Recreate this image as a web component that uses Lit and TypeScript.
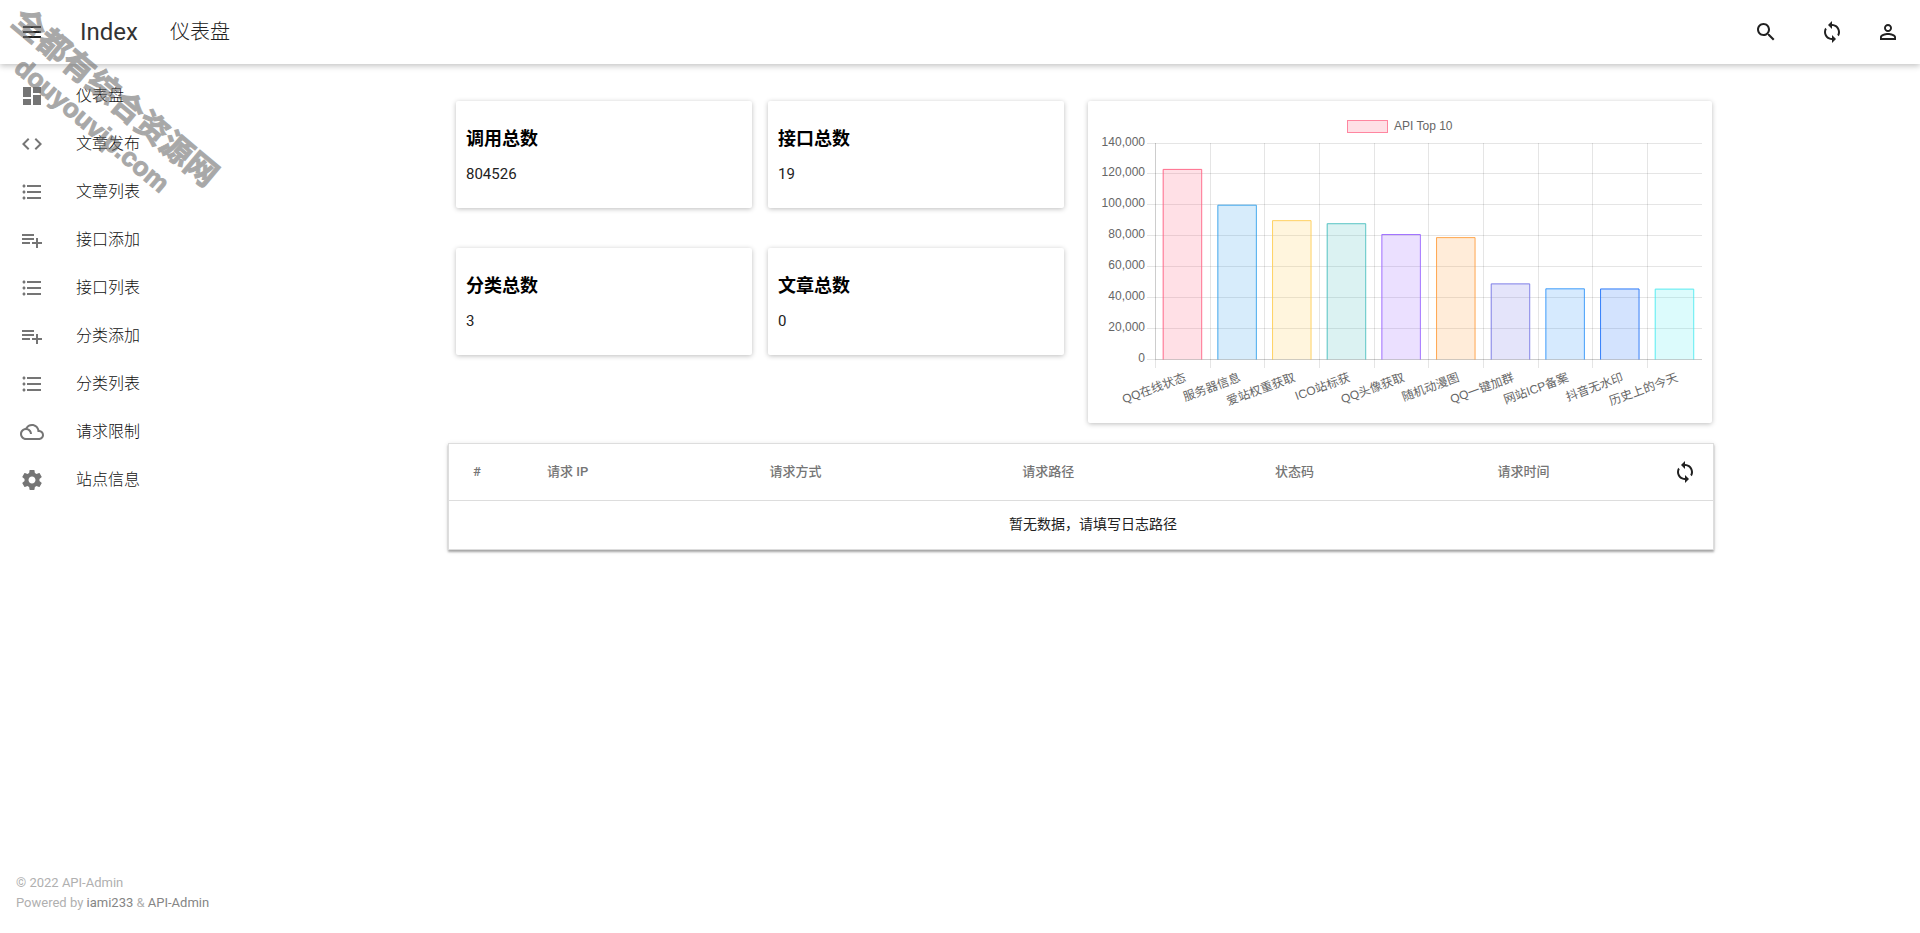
import { LitElement, html, css, svg } from "lit";
import { customElement } from "lit/decorators.js";

const ICONS: Record<string, string> = {
  menu: "M3 18h18v-2H3v2zm0-5h18v-2H3v2zm0-7v2h18V6H3z",
  search:
    "M15.5 14h-.79l-.28-.27C15.41 12.59 16 11.11 16 9.5 16 5.91 13.09 3 9.5 3S3 5.91 3 9.5 5.91 16 9.5 16c1.61 0 3.09-.59 4.23-1.57l.27.28v.79l5 4.99L20.49 19l-4.99-5zm-6 0C7.01 14 5 11.99 5 9.5S7.01 5 9.5 5 14 7.01 14 9.5 11.99 14 9.5 14z",
  sync: "M12 4V1L8 5l4 4V6c3.31 0 6 2.69 6 6 0 1.01-.25 1.97-.7 2.8l1.46 1.46C19.54 15.03 20 13.57 20 12c0-4.42-3.58-8-8-8zm0 14c-3.31 0-6-2.69-6-6 0-1.01.25-1.97.7-2.8L5.24 7.74C4.46 8.97 4 10.43 4 12c0 4.42 3.58 8 8 8v3l4-4-4-4v3z",
  person:
    "M12 5.9c1.16 0 2.1.94 2.1 2.1s-.94 2.1-2.1 2.1S9.9 9.16 9.9 8s.94-2.1 2.1-2.1m0 9c2.97 0 6.1 1.46 6.1 2.1v1.1H5.9V17c0-.64 3.13-2.1 6.1-2.1M12 4C9.79 4 8 5.79 8 8s1.79 4 4 4 4-1.79 4-4-1.79-4-4-4zm0 9c-2.67 0-8 1.34-8 4v3h16v-3c0-2.66-5.33-4-8-4z",
  dashboard: "M3 13h8V3H3v10zm0 8h8v-6H3v6zm10 0h8V11h-8v10zm0-18v6h8V3h-8z",
  code: "M9.4 16.6L4.8 12l4.6-4.6L8 6l-6 6 6 6 1.4-1.4zm5.2 0l4.6-4.6-4.6-4.6L16 6l6 6-6 6-1.4-1.4z",
  list: "M4 10.5c-.83 0-1.5.67-1.5 1.5s.67 1.5 1.5 1.5 1.5-.67 1.5-1.5-.67-1.5-1.5-1.5zm0-6c-.83 0-1.5.67-1.5 1.5S3.17 7.5 4 7.5 5.5 6.83 5.5 6 4.83 4.5 4 4.5zm0 12c-.83 0-1.5.68-1.5 1.5s.68 1.5 1.5 1.5 1.5-.68 1.5-1.5-.67-1.5-1.5-1.5zM7 19h14v-2H7v2zm0-6h14v-2H7v2zm0-8v2h14V5H7z",
  add: "M14 10H2v2h12v-2zm0-4H2v2h12V6zm4 8v-4h-2v4h-4v2h4v4h2v-4h4v-2h-4zM2 16h8v-2H2v2z",
  cloud:
    "M19.35 10.04C18.67 6.59 15.64 4 12 4 9.11 4 6.61 5.64 5.36 8.04 2.35 8.36 0 10.9 0 14c0 3.31 2.69 6 6 6h13c2.76 0 5-2.24 5-5 0-2.64-2.05-4.78-4.65-4.96zM19 18H6c-2.21 0-4-1.79-4-4s1.79-4 4-4 4 1.79 4 4h2c0-2.76-1.86-5.08-4.4-5.78C8.61 6.88 10.2 6 12 6c3.03 0 5.5 2.47 5.5 5.5v.5H19c1.65 0 3 1.35 3 3s-1.35 3-3 3z",
  settings:
    "M19.43 12.98c.04-.32.07-.64.07-.98s-.03-.66-.07-.98l2.11-1.65c.19-.15.24-.42.12-.64l-2-3.46c-.12-.22-.39-.3-.61-.22l-2.49 1c-.52-.4-1.08-.73-1.69-.98l-.38-2.65C14.46 2.18 14.25 2 14 2h-4c-.25 0-.46.18-.49.42l-.38 2.65c-.61.25-1.17.59-1.69.98l-2.49-1c-.23-.09-.49 0-.61.22l-2 3.46c-.13.22-.07.49.12.64l2.11 1.65c-.04.32-.07.65-.07.98s.03.66.07.98l-2.11 1.65c-.19.15-.24.42-.12.64l2 3.46c.12.22.39.3.61.22l2.49-1c.52.4 1.08.73 1.69.98l.38 2.65c.03.24.24.42.49.42h4c.25 0 .46-.18.49-.42l.38-2.65c.61-.25 1.17-.59 1.69-.98l2.49 1c.23.09.49 0 .61-.22l2-3.46c.12-.22.07-.49-.12-.64l-2.11-1.65zM12 15.5c-1.93 0-3.5-1.57-3.5-3.5s1.57-3.5 3.5-3.5 3.5 1.57 3.5 3.5-1.57 3.5-3.5 3.5z",
};

const icon = (name: string) =>
  html`<svg class="icon" viewBox="0 0 24 24" aria-hidden="true"><path d=${ICONS[name]}></path></svg>`;

const NAV = [
  ["dashboard", "仪表盘"],
  ["code", "文章发布"],
  ["list", "文章列表"],
  ["add", "接口添加"],
  ["list", "接口列表"],
  ["add", "分类添加"],
  ["list", "分类列表"],
  ["cloud", "请求限制"],
  ["settings", "站点信息"],
];

const STATS = [
  ["调用总数", "804526"],
  ["接口总数", "19"],
  ["分类总数", "3"],
  ["文章总数", "0"],
];

const BARS: [string, number, string][] = [
  ["QQ在线状态", 123200, "255,99,132"],
  ["服务器信息", 100000, "54,162,235"],
  ["爱站权重获取", 90000, "255,206,86"],
  ["ICO站标获", 88000, "75,192,192"],
  ["QQ头像获取", 81000, "153,102,255"],
  ["随机动漫图", 79000, "255,159,64"],
  ["QQ一键加群", 49000, "120,120,230"],
  ["网站ICP备案", 45800, "50,150,250"],
  ["抖音无水印", 45700, "36,116,250"],
  ["历史上的今天", 45600, "80,235,240"],
];

@customElement("api-chart")
class ApiChart extends LitElement {
  static styles = css`
    :host { display: block; }
    .chart { display: block; width: 100%; height: auto; }
    .label { font: 12px "Liberation Sans", "Noto Sans CJK SC", sans-serif; fill: #666; }
    .end { text-anchor: end; }
    .grid { stroke: rgba(0, 0, 0, 0.1); stroke-width: 1; }
    .axis { stroke: rgba(0, 0, 0, 0.1); stroke-width: 1; }
  `;

  render() {
    const left = 67;
    const right = 614;
    const top = 42;
    const bottom = 258;
    const step = 54.67;
    const max = 140000;
    const rows = Array.from({ length: 8 }, (_, i) => i);
    return html`<svg class="chart" viewBox="0 0 624 322" role="img" aria-label="API Top 10">
      <rect x="259.5" y="19.5" width="40" height="12" fill="rgba(255,99,132,.2)" stroke="rgb(255,99,132)" stroke-opacity=".75"></rect>
      <text class="label" x="306" y="29">API Top 10</text>
      ${rows.map((i) => {
        const y = Math.floor(top + (i * (bottom - top)) / 7) + 0.5;
        return svg`<line class="grid" x1=${left - 8} x2=${right} y1=${y} y2=${y}></line>
          <text class="label end" x="57" y=${y + 2.5}>${(max - i * 20000).toLocaleString("en-US")}</text>`;
      })}
      ${BARS.map(([name], i) => {
        const x = Math.round(left + i * step) + 0.5;
        return svg`<line class="grid" x1=${x} x2=${x} y1=${top} y2=${bottom + 9}></line>
          <text class="label end" transform="translate(${left + step * (i + 0.5) + 3} 276) rotate(-20)" y="4">${name}</text>`;
      })}
      ${BARS.map(([, value, rgb], i) => {
        const x = left + 7.7 + i * step;
        const y = bottom - (value / max) * (bottom - top);
        const w = 39;
        return svg`<rect x=${x} y=${y} width=${w} height=${bottom + 0.5 - y} fill="rgba(${rgb},.2)"></rect>
          <path d="M${x + 0.5} ${bottom + 0.5}V${y + 0.5}H${x + w}V${bottom + 0.5}" fill="none" stroke="rgb(${rgb})" stroke-opacity=".9"></path>`;
      })}
      <path class="axis" d="M${left + 0.5} ${top}V${bottom}M${left} ${bottom + 0.5}H${right}" fill="none"></path>
    </svg>`;
  }
}

@customElement("app-root")
class AppRoot extends LitElement {
  static styles = css`
    :host {
      display: flex;
      flex-direction: column;
      position: relative;
      min-height: 100vh;
      font: 15px/22px Roboto, "Noto Sans CJK SC", sans-serif;
      color: #000;
      background: #fff;
    }
    * { box-sizing: border-box; }
    h1, h2, h3, p { margin: 0; }
    a { color: inherit; text-decoration: none; }
    .icon { display: block; width: 24px; height: 24px; fill: currentColor; }
    .btn {
      display: flex;
      align-items: center;
      justify-content: center;
      width: 48px;
      height: 48px;
      padding: 0;
      border: 0;
      background: none;
      color: #212121;
    }
    .bar {
      display: flex;
      align-items: center;
      height: 64px;
      padding: 0 8px;
      gap: 8px;
      color: #333;
      box-shadow: 0 2px 6px rgba(0, 0, 0, 0.24);
    }
    .brand { margin-left: 16px; font-size: 24px; line-height: 64px; font-weight: 400; }
    .title { flex: 1; margin-left: 24px; font-size: 20px; line-height: 64px; font-weight: 300; color: #212121; }
    .search { margin-right: 10px; }
    .body { display: flex; flex: 1; }
    .side { display: flex; flex-direction: column; width: 240px; padding: 8px 0 20px; }
    .nav { flex: 1; }
    .item {
      display: flex;
      align-items: center;
      gap: 32px;
      height: 48px;
      padding: 0 20px;
      color: #111;
      font-size: 16px;
      font-weight: 300;
    }
    .item .icon { color: #757575; }
    .foot { padding: 0 16px; font-size: 13px; line-height: 20px; color: #b0b0b0; }
    .foot a { color: #858585; }
    .main { flex: 1; min-width: 0; padding-top: 37px; }
    .wrap { max-width: 1280px; margin: 0 auto; padding: 0 6px 0 8px; }
    .top {
      display: grid;
      grid-template-columns: 608fr 624fr;
      column-gap: 24px;
      align-items: start;
      padding: 0 2px 0 8px;
    }
    .stats { display: grid; grid-template-columns: 1fr 1fr; gap: 40px 16px; }
    .card { border-radius: 2px; box-shadow: 0 1px 5px rgba(0, 0, 0, 0.26); background: #fff; }
    .stat { padding: 26px 10px 23px; }
    .stat h3 { font-size: 18px; line-height: 24px; margin-bottom: 12px; font-weight: 700; }
    .stat p { color: #222; }
    .log {
      width: 100%;
      margin-top: 20px;
      border: 1px solid #ddd;
      border-collapse: separate;
      border-spacing: 0;
      table-layout: fixed;
      box-shadow: 0 2px 2px rgba(0, 0, 0, 0.3), 0 1px 5px rgba(0, 0, 0, 0.12);
    }
    .log th {
      height: 56px;
      padding: 0 0 0 28px;
      text-align: left;
      font-size: 13px;
      line-height: 20px;
      font-weight: 500;
      color: #757575;
    }
    .log th:first-child { padding-left: 24px; }
    .log td {
      height: 49px;
      padding: 0 0 2px 24px;
      border-top: 1px solid #ddd;
      text-align: center;
      font-size: 14px;
      line-height: 20px;
      color: #212121;
    }
    .num { width: 70px; }
    .mid { width: 17.6%; }
    .wide { width: 20%; }
    .last { display: flex; align-items: center; justify-content: space-between; padding-right: 4px; }
    .mark {
      position: absolute;
      left: 30px;
      top: 0;
      transform: rotate(40deg);
      transform-origin: 0 0;
      pointer-events: none;
      color: #707070;
      opacity: 0.6;
      -webkit-text-stroke: 1px #707070;
      font-family: "Liberation Sans", "Noto Sans CJK SC", sans-serif;
      font-weight: 700;
      white-space: nowrap;
    }
    .mark-cn { font-size: 32px; line-height: 40px; }
    .mark-en { font-size: 26px; line-height: 32px; padding-left: 32px; }
  `;

  render() {
    return html`
      <header class="bar">
        <button class="btn" aria-label="菜单">${icon("menu")}</button>
        <h1 class="brand">Index</h1>
        <h2 class="title">仪表盘</h2>
        <button class="btn search" aria-label="搜索">${icon("search")}</button>
        <button class="btn" aria-label="刷新">${icon("sync")}</button>
        <button class="btn" aria-label="用户">${icon("person")}</button>
      </header>
      <div class="body">
        <aside class="side">
          <nav class="nav">
            ${NAV.map(([i, label]) => html`<a class="item" href="#">${icon(i)}<span>${label}</span></a>`)}
          </nav>
          <footer class="foot">
            <p>© 2022 API-Admin</p>
            <p>Powered by <a href="#">iami233</a> &amp; <a href="#">API-Admin</a></p>
          </footer>
        </aside>
        <main class="main">
          <div class="wrap">
            <div class="top">
              <div class="stats">
                ${STATS.map(
                  ([name, value]) => html`<section class="card stat"><h3>${name}</h3><p>${value}</p></section>`
                )}
              </div>
              <api-chart class="card"></api-chart>
            </div>
            <table class="log">
              <thead>
                <tr>
                  <th class="num">#</th>
                  <th class="mid">请求 IP</th>
                  <th class="wide">请求方式</th>
                  <th class="wide">请求路径</th>
                  <th class="mid">状态码</th>
                  <th>
                    <div class="last">
                      请求时间
                      <button class="btn" aria-label="刷新日志">${icon("sync")}</button>
                    </div>
                  </th>
                </tr>
              </thead>
              <tbody>
                <tr><td colspan="6">暂无数据，请填写日志路径</td></tr>
              </tbody>
            </table>
          </div>
        </main>
      </div>
      <div class="mark">
        <div class="mark-cn">全都有综合资源网</div>
        <div class="mark-en">douyouvip.com</div>
      </div>
    `;
  }
}
